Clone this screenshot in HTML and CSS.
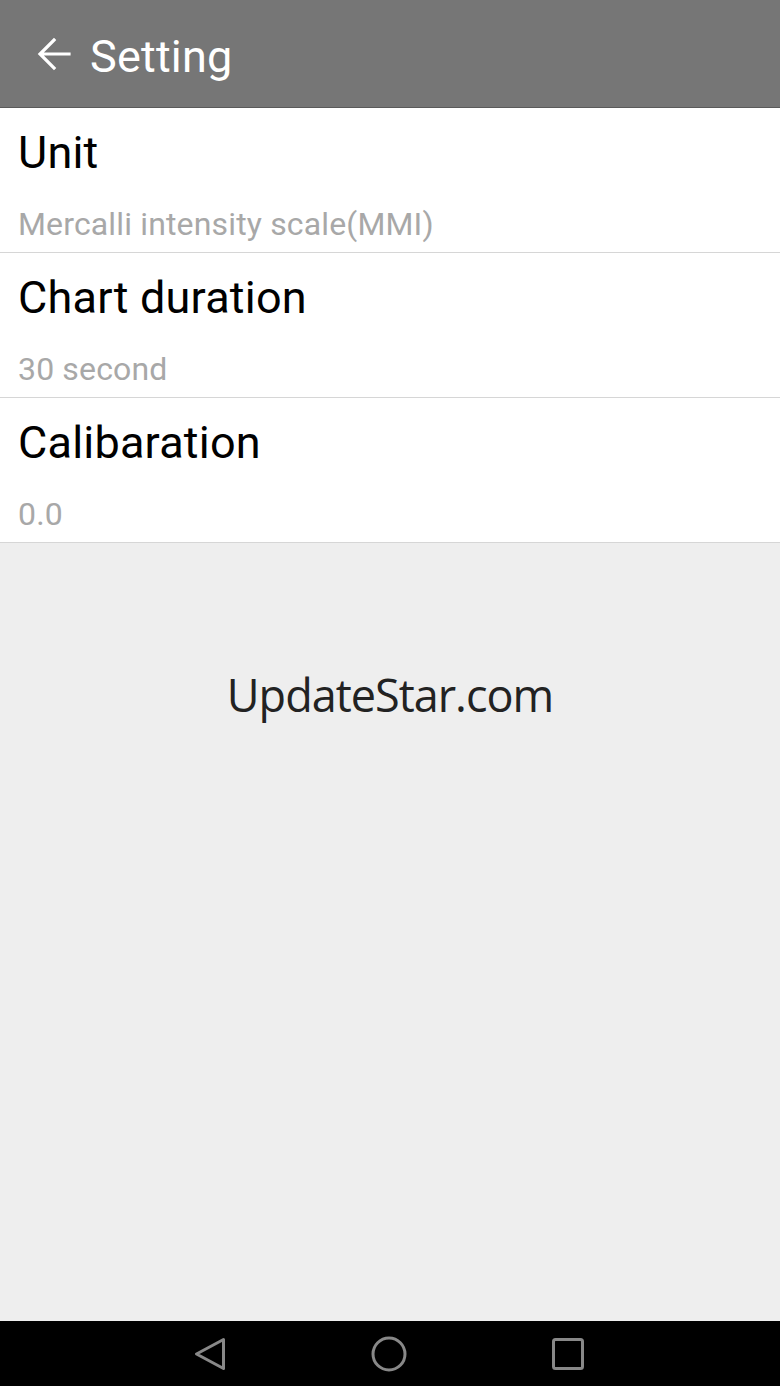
FILE: index.html
```html
<!DOCTYPE html>
<html>
<head>
<meta charset="utf-8">
<link rel="stylesheet" href="styles.css">
</head>
<body>
<div class="screen">
  <header class="appbar">
    <svg class="back" width="40" height="40" viewBox="0 0 40 40"><path d="M35 20 H7 M20 6 L6 20 L20 34" fill="none" stroke="#fff" stroke-width="3.2" stroke-linecap="square" stroke-linejoin="miter"/></svg>
    <span class="title">Setting</span>
  </header>
  <ul class="prefs">
    <li class="pref"><div class="pref-title">Unit</div><div class="pref-summary">Mercalli intensity scale(MMI)</div></li>
    <li class="pref"><div class="pref-title">Chart duration</div><div class="pref-summary">30 second</div></li>
    <li class="pref"><div class="pref-title">Calibaration</div><div class="pref-summary">0.0</div></li>
  </ul>
  <main class="empty">
    <div class="watermark">UpdateStar.com</div>
  </main>
  <nav class="navbar">
    <svg width="40" height="40" viewBox="0 0 40 40"><path d="M33.5 5.5 L6.5 20 L33.5 34.5 Z" fill="none" stroke="#888" stroke-width="3" stroke-linejoin="round"/></svg>
    <svg width="40" height="40" viewBox="0 0 40 40"><circle cx="20" cy="20" r="16" fill="none" stroke="#888" stroke-width="3"/></svg>
    <svg width="40" height="40" viewBox="0 0 40 40"><rect x="5.5" y="5.5" width="29" height="29" rx="2" fill="none" stroke="#888" stroke-width="3"/></svg>
  </nav>
</div>
</body>
</html>
```
FILE: styles.css
```css
* { box-sizing: border-box; }
html, body { margin: 0; padding: 0; }
body { font-family: Roboto, "Noto Sans", sans-serif; background: #eeeeee; }
.screen { width: 780px; height: 1386px; display: flex; flex-direction: column; }
.appbar {
  height: 108px; background: #767676; border-bottom: 1px solid #5a5a5a;
  display: flex; align-items: flex-start; padding: 34px 0 0 34px; gap: 16px;
  flex-shrink: 0;
}
.back { display: block; }
.title { color: #fff; font-size: 45px; line-height: 45px; letter-spacing: 0.2px; }
.prefs { list-style: none; margin: 0; padding: 0; background: #fff; }
.pref {
  height: 145px; border-bottom: 1px solid #d6d6d6; padding: 19px 18px 0;
  display: flex; flex-direction: column;
}
.pref-title { color: #000; font-size: 45px; line-height: 52px; letter-spacing: 0.2px; }
.pref-summary { color: #a8a8a8; font-size: 32px; line-height: 40px; margin-top: 25px; letter-spacing: 0.15px; }
.empty { flex: 1; background: #eeeeee; display: flex; justify-content: center; padding-top: 122px; }
.watermark { font-family: "Open Sans", "Noto Sans", sans-serif; color: #222; font-size: 45px; line-height: 60px; letter-spacing: -1px; }
.navbar {
  height: 65px; background: #000; flex-shrink: 0;
  display: flex; justify-content: flex-start; align-items: center; gap: 139px; padding-left: 190px;
}
.navbar svg { display: block; }
```
